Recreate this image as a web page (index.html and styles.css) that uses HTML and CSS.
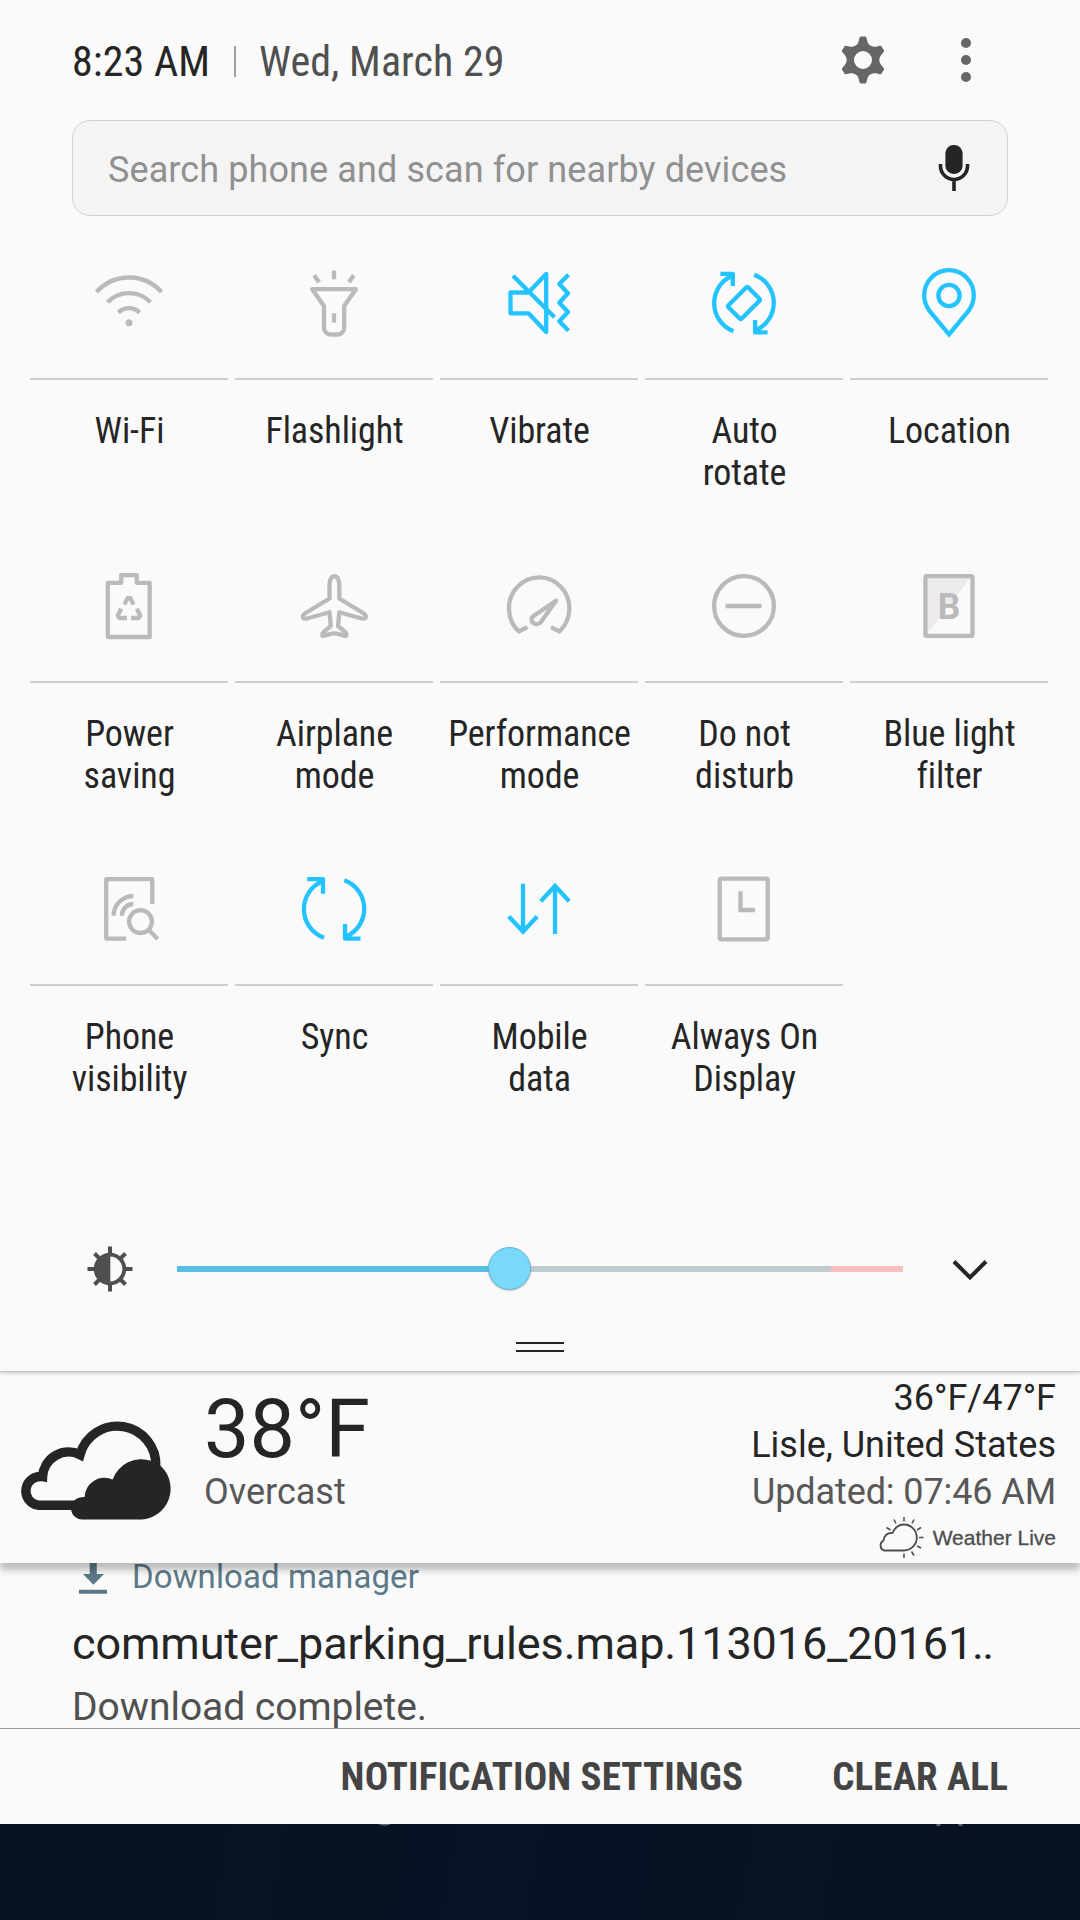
FILE: index.html
```html
<!DOCTYPE html>
<html lang="en">
<head>
<meta charset="utf-8">
<title>Notification panel</title>
<link rel="stylesheet" href="styles.css">
</head>
<body>
<div class="screen">

  <section class="quick-panel">
    <header class="topbar">
      <span class="time">8:23 AM</span>
      <span class="sep"></span>
      <span class="date">Wed, March 29</span>
      <svg class="gear" viewBox="0 0 48 48">
        <path fill-rule="evenodd" d="M20.6 1.6Q20.9 .6 22 .6H26Q27.100 .6 27.400 1.600L28.700 6.500Q29.400 8.400 31.300 9.400Q34 11.100 37 10.700L41 9.800Q42 9.600 42.600 10.500L44.900 14.300Q45.400 15.300 44.700 16.100L41.800 19.500Q40.300 21.500 40.300 24Q40.300 26.500 41.800 28.500L44.700 31.900Q45.400 32.700 44.900 33.700L42.600 37.500Q42 38.400 41 38.200L37 37.300Q34 36.900 31.300 38.600Q29.400 39.600 28.700 41.500L27.400 46.400Q27.100 47.400 26 47.400H22Q20.900 47.400 20.600 46.400L19.300 41.500Q18.600 39.600 16.700 38.600Q14 36.900 11 37.300L7 38.200Q6 38.400 5.400 37.500L3.100 33.700Q2.600 32.700 3.300 31.900L6.200 28.500Q7.700 26.500 7.700 24Q7.700 21.500 6.200 19.500L3.300 16.100Q2.600 15.300 3.100 14.300L5.400 10.500Q6 9.600 7 9.800L11 10.700Q14 11.100 16.700 9.400Q18.600 8.400 19.300 6.500ZM24 15a9 9 0 1 0 0 18a9 9 0 1 0 0-18Z"/>
      </svg>
      <svg class="more" viewBox="0 0 10 46">
        <circle cx="5" cy="6" r="5"/><circle cx="5" cy="23" r="5"/><circle cx="5" cy="40" r="5"/>
      </svg>
    </header>

    <div class="search">
      <span class="placeholder">Search phone and scan for nearby devices</span>
      <svg class="mic" viewBox="0 0 34 48">
        <rect x="8.400" y="1" width="17.200" height="29" rx="8.300" fill="#252525"/>
        <path d="M3.500 20V22A13.500 13.500 0 0 0 30.500 22V20M17 36V47" fill="none" stroke="#252525" stroke-width="3.600"/>
      </svg>
    </div>

    <div class="tiles">
      <div class="tile">
        <svg class="icon" viewBox="0 0 80 80"><path d="M7.500 29A43.700 43.700 0 0 1 72.500 29M18.500 39.200A30 30 0 0 1 61.500 39.200M29.300 49.600A15.200 15.200 0 0 1 50.700 49.600"/><circle class="solid" cx="40" cy="59.700" r="3.500"/></svg>
        <span class="label">Wi-Fi</span>
      </div>
      <div class="tile">
        <svg class="icon" viewBox="0 0 80 80"><path d="M18.200 26.200H61.800L50.200 43V65a6.500 6.500 0 0 1-6.500 6.500h-7.200a6.500 6.500 0 0 1-6.500-6.500V43ZM40 7.500V16.200M40 50.200V59.600M20.200 12.200L25 19.300M59.800 12.200L55 19.300"/></svg>
        <span class="label">Flashlight</span>
      </div>
      <div class="tile on">
        <svg class="icon" viewBox="0 0 80 80"><path d="M29.500 29.500H11.500V50.300H29.500L47.200 69V11L29.500 29.500M14 12.700L55.500 54.300M69.500 11.700L60.300 21L69 30.300L60.300 39.700L69 49L60.300 58.300L69.500 67.700"/></svg>
        <span class="label">Vibrate</span>
      </div>
      <div class="tile on">
        <svg class="icon" viewBox="0 0 80 80"><path d="M16.400 10.800H28.800V23M28 12.800A30 30 0 0 0 29.400 68.200M63.600 69.400H51.100V57M52.500 67A30 30 0 0 0 50.200 11.700"/><rect x="26" y="30.600" width="28" height="18.800" rx="1.500" transform="rotate(-45 40 40)"/></svg>
        <span class="label">Auto<br>rotate</span>
      </div>
      <div class="tile on">
        <svg class="icon" viewBox="0 0 80 80"><path stroke-linejoin="miter" d="M40 71.300L20.500 48Q15.200 40.500 15.200 32.500A24.800 25.400 0 0 1 64.800 32.500Q64.800 40.500 59.500 48Z"/><circle cx="40" cy="32.500" r="10.600"/></svg>
        <span class="label">Location</span>
      </div>

      <div class="tile">
        <svg class="icon" viewBox="0 0 80 80"><path d="M32.200 16.800V9.200H47.700V16.800H60.700V71H18.800V16.800ZM35.300 38.500L38.600 32.200H41.300L44.700 38.500M32.200 42.700L28.800 49.500L30.200 52H38M47.800 42.700L51.200 49.500L49.800 52H42"/></svg>
        <span class="label">Power<br>saving</span>
      </div>
      <div class="tile">
        <svg class="icon" viewBox="0 0 80 80"><path d="M40.400 10.200C37.200 10.200 35.500 15 35.500 18.500V32.500L12.500 46.500C8.500 49 8.600 50 9.200 52C10 53 11.500 52.800 13 52.500L35.500 46.300L36.800 60L29.500 66.200C28 67.500 28.200 68 28.500 69.800C33 69.500 36 67.400 40.400 67.400C44.800 67.400 47.800 69.500 52.300 69.800C52.600 68 52.800 67.500 51.300 66.200L44 60L45.300 46.300L67.800 52.500C69.300 52.800 70.800 53 71.600 52C72.200 50 72.300 49 68.300 46.500L45.300 32.500V18.500C45.300 15 43.600 10.200 40.400 10.200Z"/></svg>
        <span class="label">Airplane<br>mode</span>
      </div>
      <div class="tile">
        <svg class="icon" viewBox="0 0 80 80"><path stroke-linejoin="miter" d="M28.300 61.200L20 65.500A30.200 31 0 1 1 60.300 65.500L52 61.200"/><path d="M57 34.700L34.500 50C28.500 55 37.500 61.500 42 56Z"/></svg>
        <span class="label">Performance<br>mode</span>
      </div>
      <div class="tile">
        <svg class="icon" viewBox="0 0 80 80"><circle cx="40" cy="40" r="29.900"/><path d="M21.500 40H57.500"/></svg>
        <span class="label">Do not<br>disturb</span>
      </div>
      <div class="tile">
        <svg class="icon" viewBox="0 0 80 80"><path d="M17 11H62L17 69Z" fill="#ebebeb" stroke="none"/><rect x="16.400" y="10.200" width="47.100" height="59.700" rx="1.500"/><text class="glyph" x="28.700" y="53.300" textLength="22.500" lengthAdjust="spacingAndGlyphs">B</text></svg>
        <span class="label">Blue light<br>filter</span>
      </div>

      <div class="tile">
        <svg class="icon" viewBox="0 0 80 80"><path d="M63.300 35V10.200H17.200V69.600H37M44.300 27A19.800 19.800 0 0 0 24.600 46.800M44.300 35A11.500 11.500 0 0 0 32.900 46.800M60.500 61.500L68.700 70"/><circle cx="51.500" cy="52.600" r="11.400"/></svg>
        <span class="label">Phone<br>visibility</span>
      </div>
      <div class="tile on">
        <svg class="icon" viewBox="0 0 80 80"><path d="M13.200 10.200H29V24.700M28.300 12.300A30.300 30.300 0 0 0 30 68.700M66.500 69.600H51V55M51.700 67.700A30.300 30.300 0 0 0 50.300 11.300"/></svg>
        <span class="label">Sync</span>
      </div>
      <div class="tile on">
        <svg class="icon" viewBox="0 0 80 80"><path stroke-linejoin="miter" d="M24 14.800V62M9.800 47.500L24 62.500L38.200 47.500M56 65V17M41.800 32.300L56 17L70.200 32.300"/></svg>
        <span class="label">Mobile<br>data</span>
      </div>
      <div class="tile">
        <svg class="icon" viewBox="0 0 80 80"><rect x="15.700" y="9.600" width="48" height="60.700" rx="1.500"/><path stroke-linejoin="miter" d="M36.500 22.300V41H51"/></svg>
        <span class="label">Always On<br>Display</span>
      </div>
    </div>

    <div class="brightness">
      <svg class="sun" viewBox="0 0 46 46">
        <path d="M23 .500V8M23 38V45.500M.500 23H8M38 23H45.500M7.500 7.500L12.500 12.500M33.500 33.500L38.500 38.500M38.500 7.500L33.500 12.500M12.500 33.500L7.500 38.500" stroke="#4f4f4f" stroke-width="4"/>
        <circle cx="23" cy="23" r="14.300" fill="#fafafa" stroke="#4f4f4f" stroke-width="3.800"/>
        <path d="M23.300 8V38A15 15 0 0 1 23.300 8Z" fill="#4f4f4f"/>
      </svg>
      <div class="track"><i class="done"></i><i class="rest"></i><i class="over"></i><b class="thumb"></b></div>
      <svg class="chevron" viewBox="0 0 36 24"><path d="M2 4.500L18 20.500L34 4.500" fill="none" stroke="#252525" stroke-width="4"/></svg>
    </div>
    <div class="handle"></div>
  </section>

  <section class="weather">
    <svg class="clouds" viewBox="0 0 162 110">
      <path d="M74 90.200H23A14 14 0 0 1 27.600 61.700A26 26 0 0 1 65 39.700A38.600 38.600 0 0 1 140.800 52" fill="none" stroke="#252525" stroke-width="9.400"/>
      <path d="M67.600 104.600A11.200 11.200 0 0 1 67 82.200L69.700 81.800A19.600 19.600 0 0 1 97.600 64.600A30.500 30.500 0 0 1 136 45.700L146.300 51.500A31 31 0 0 1 126.500 104.600Z" fill="#252525"/>
    </svg>
    <div class="now">
      <span class="temp">38°F</span>
      <span class="cond">Overcast</span>
    </div>
    <div class="place">
      <span>36°F/47°F</span>
      <span>Lisle, United States</span>
      <span class="updated">Updated: 07:46 AM</span>
      <div class="brand">
        <svg class="brand-icon" viewBox="0 0 48 44">
          <path d="M7 34.500A5.500 5.500 0 0 1 6.500 24.500Q8 16.500 15.500 17C18 11 22 8.500 27 8.500A12.800 13 0 0 1 27 34.500Z" fill="none" stroke="#4c4c4c" stroke-width="1.800"/>
          <path d="M27 1V5.500M17 3.500L19 7.500M37 3.500L35 7.500M9.500 11.500L13.500 14M44 11.500L40 14M42 21.500H46.500M40 30L44 32M34.500 35.500L37 39.500M27 37.500V42" stroke="#4c4c4c" stroke-width="1.500"/>
        </svg>
        <span class="brand-name">Weather Live</span>
      </div>
    </div>
  </section>

  <section class="download">
    <div class="app">
      <svg class="dl" viewBox="0 0 28 32"><path d="M10.700 0H17.800V11H25L14.400 21.800L4 11H10.700ZM0 26.700H28V30.700H0Z" fill="#5a7886"/></svg>
      <span class="app-name">Download manager</span>
    </div>
    <div class="file">commuter_parking_rules.map.113016_20161<span class="dots">..</span></div>
    <div class="status">Download complete.</div>
  </section>

  <footer class="actions">
    <span>NOTIFICATION SETTINGS</span>
    <span>CLEAR ALL</span>
  </footer>

  <!-- home screen behind the shade, with the tips of its icon labels -->
  <div class="home">
    <svg class="tips" viewBox="0 0 1080 4">
      <path d="M378 0H391Q385 3.500 378 0ZM936.500 0H940.500V2H936.500ZM958.500 0H962.500V2H958.500Z" fill="#62646a"/>
    </svg>
  </div>
</div>
</body>
</html>
```
FILE: styles.css
```css
* { box-sizing: border-box; }
body { margin: 0; background: #081222; }

.screen {
  width: 1080px;
  height: 1920px;
  overflow: hidden;
  display: flex;
  flex-direction: column;
  font-family: Roboto, sans-serif;
  color: #252525;
}
svg { display: block; flex: none; }

/* quick settings */
.quick-panel {
  flex: none;
  height: 1372px;
  background: #fafafa;
  border-bottom: 1px solid #c8c8c8;
  position: relative;
  box-shadow: 0 1px 4px rgba(0, 0, 0, .22);
  z-index: 2;
}

.topbar {
  height: 120px;
  padding: 0 109px 0 72px;
  display: flex;
  align-items: center;
  font-family: "Roboto Condensed", Roboto, sans-serif;
  font-size: 42px;
  line-height: 50px;
  letter-spacing: .06px;
}
.time, .date { padding-top: 3px; white-space: nowrap; }
.sep { width: 2px; height: 31px; margin: 3px 23px 0 24px; background: #a0a0a0; }
.date { color: #505050; }
.gear { width: 48px; height: 48px; margin-left: auto; fill: #666; }
.more { width: 10px; height: 46px; margin-left: 74px; fill: #666; }

.search {
  height: 96px;
  margin: 0 72px;
  padding: 0 36px 0 35px;
  border: 1px solid #d2d2d2;
  border-radius: 18px;
  background: #f4f4f4;
  display: flex;
  align-items: center;
  justify-content: space-between;
}
.placeholder { padding-top: 3px; font-size: 36px; letter-spacing: .1px; color: #909090; white-space: nowrap; }
.mic { width: 34px; height: 48px; }

.tiles {
  padding: 47px 32px 0 30px;
  display: grid;
  grid-template-columns: repeat(5, 198px);
  grid-auto-rows: 303px;
  column-gap: 7px;
}
.tile { display: flex; flex-direction: column; align-items: center; color: #bababa; }
.tile.on { color: #22c3ff; }
.icon { width: 80px; height: 80px; fill: none; stroke: currentColor; stroke-width: 4.3; stroke-linejoin: round; }
.solid { fill: currentColor; stroke: none; }
.glyph { fill: currentColor; stroke: none; font: bold 37px Roboto, sans-serif; }
.label {
  width: 100%;
  margin-top: 35px;
  padding: 30px 0 0 1px;
  border-top: 2px solid #cecece;
  font-family: "Roboto Condensed", Roboto, sans-serif;
  font-size: 36px;
  line-height: 42px;
  text-align: center;
  letter-spacing: -.08px;
  color: #252525;
}

.brightness {
  height: 88px;
  margin-top: 53px;
  padding: 0 92px 0 86.5px;
  display: flex;
  align-items: center;
}
.sun { width: 46px; height: 46px; margin-right: 44.5px; }
.track { width: 726px; height: 6px; display: flex; position: relative; }
.done { width: 333px; background: #58c0e4; }
.rest { width: 321px; background: #c2ccd0; }
.over { width: 72px; background: #f9bfbd; }
.thumb {
  position: absolute;
  left: 311px;
  top: -19px;
  width: 43px;
  height: 43px;
  border-radius: 50%;
  background: #7ad9fb;
  border: 1px solid #63b4d4;
  box-shadow: 0 1px 2px rgba(0, 0, 0, .2);
}
.chevron { width: 36px; height: 24px; margin-left: 49px; }
.handle {
  width: 48px;
  height: 10px;
  margin: 29px auto 0;
  border-top: 2px solid #252525;
  border-bottom: 2px solid #252525;
}

/* weather */
.weather {
  flex: none;
  height: 191px;
  background: #fafafa;
  position: relative;
  z-index: 1;
  box-shadow: 0 7px 7px rgba(0, 0, 0, .25);
  display: flex;
  padding: 0 24px 0 15px;
}
.clouds { width: 162px; height: 110px; margin-top: 43px; }
.now { display: flex; flex-direction: column; margin: 17px 0 0 27px; }
.temp { font-size: 81px; line-height: 82px; }
.cond { font-size: 36px; line-height: 42px; color: #585858; }
.place {
  margin-left: auto;
  padding-top: 3px;
  display: flex;
  flex-direction: column;
  align-items: flex-end;
  font-size: 36px;
  line-height: 47px;
}
.updated { color: #585858; letter-spacing: -.1px; }
.brand { height: 42px; display: flex; align-items: center; gap: 8px; }
.brand-icon { width: 48px; height: 44px; margin-top: 1px; }
.brand-name { font: 21px/26px "Liberation Sans", Arial, sans-serif; color: #4c4c4c; -webkit-text-stroke: .3px #4c4c4c; padding-top: 2px; }

/* download notification */
.download {
  flex: none;
  height: 165px;
  overflow: hidden;
  padding: 0 72px;
  background: #fafafa;
}
.app { height: 32px; display: flex; align-items: center; gap: 25px; padding-left: 7px; }
.dl { width: 28px; height: 32px; }
.app-name { font-size: 33px; line-height: 40px; margin-top: -4px; color: #5c7a88; letter-spacing: .1px; }
.file { font-size: 45px; line-height: 54px; margin-top: 22px; white-space: nowrap; letter-spacing: -.12px; }
.dots { letter-spacing: -1.800px; margin-left: -1px; }
.status { font-size: 39px; line-height: 48px; margin-top: 12px; color: #505050; letter-spacing: -.05px; }

.actions {
  flex: none;
  height: 96px;
  padding: 0 72px;
  background: #fafafa;
  border-top: 1px solid #999;
  display: flex;
  justify-content: flex-end;
  align-items: center;
  gap: 89px;
  font-family: "Roboto Condensed", Roboto, sans-serif;
  font-size: 39px;
  font-weight: 700;
  letter-spacing: .15px;
  color: #444;
}

.home { flex: 1; background: linear-gradient(100deg, #081120, #061324 45%, #081121); }
.tips { width: 1080px; height: 4px; }
```
